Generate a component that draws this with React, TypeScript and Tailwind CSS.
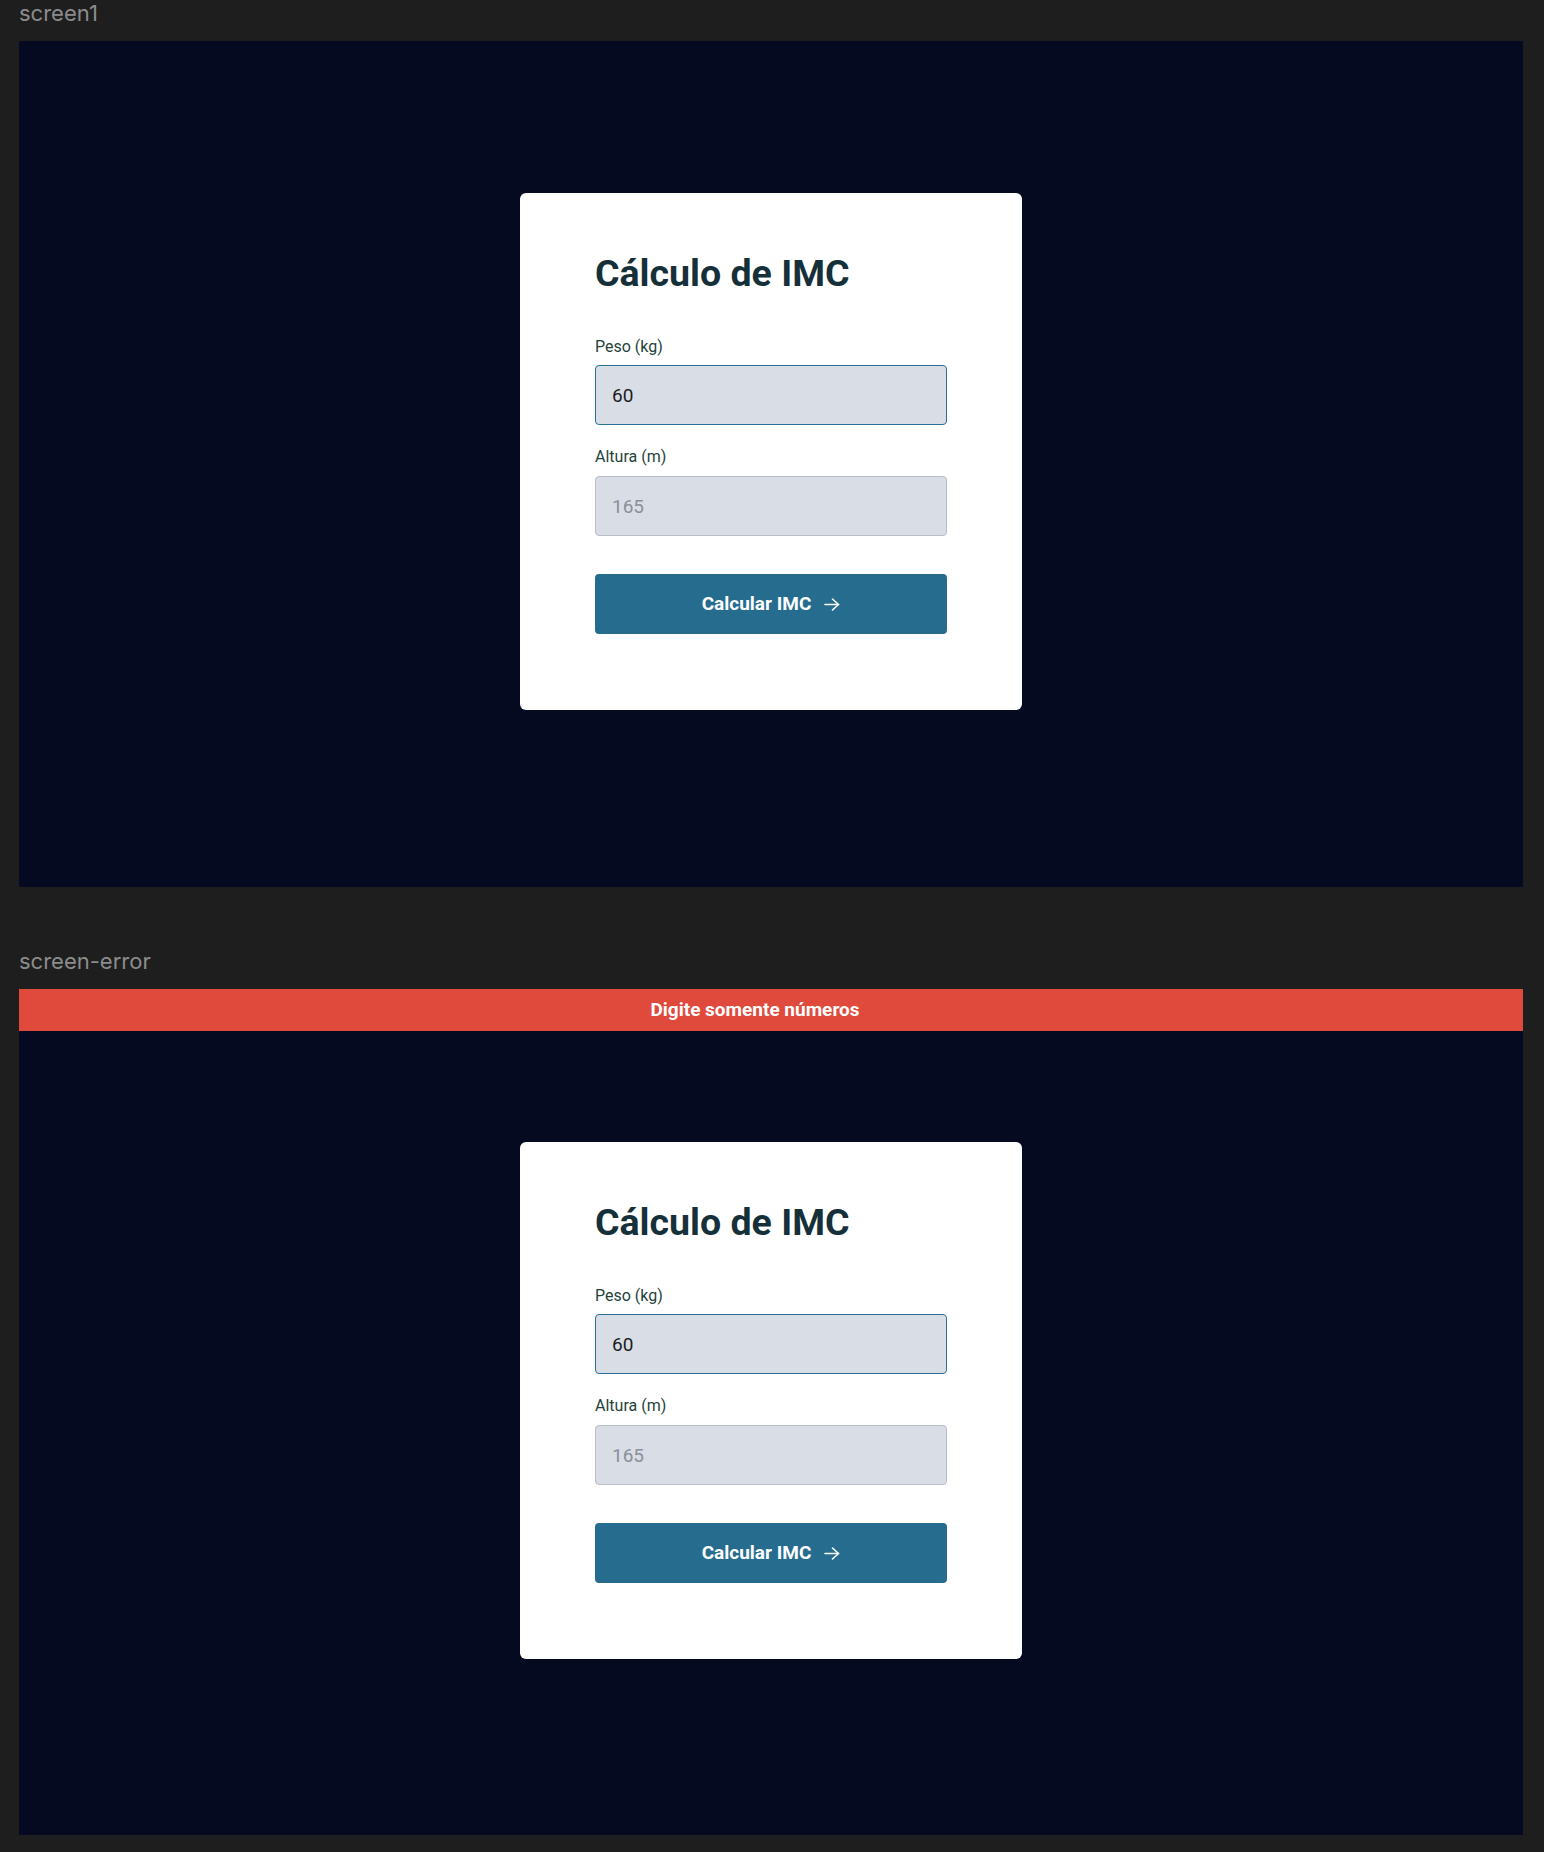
import React from "react";

function Arrow() {
  return (
    <svg width="16" height="13" viewBox="0 0 16 13" fill="none" className="block">
      <path d="M1 6.5h13.5" stroke="white" strokeWidth="1.6" strokeLinecap="round" />
      <path d="M8.5 1l6 5.5-6 5.5" stroke="white" strokeWidth="1.6" strokeLinecap="round" strokeLinejoin="round" />
    </svg>
  );
}

function Card() {
  return (
    <div className="w-[502px] rounded-[6px] bg-white px-[75px] pt-[58px] pb-[76px] font-['Roboto',sans-serif]">
      <h1 className="text-[37.5px] leading-[45px] font-bold text-[#16303a]">Cálculo de IMC</h1>
      <label className="mt-[41px] block text-[16px] leading-[19px] text-[#1f433b]">Peso (kg)</label>
      <input
        readOnly
        value="60"
        className="mt-[9px] block h-[60px] w-full rounded-[4px] border border-[#2a6f97] bg-[#d9dde5] px-4 text-[19px] text-[#1c1c1c] outline-none font-['Roboto',sans-serif]"
      />
      <label className="mt-[22px] block text-[16px] leading-[19px] text-[#1f433b]">Altura (m)</label>
      <input
        readOnly
        placeholder="165"
        className="mt-[10px] block h-[60px] w-full rounded-[4px] border border-[#b9bdc6] bg-[#d9dde5] px-4 text-[19px] text-[#1c1c1c] placeholder:text-[#8b8f99] outline-none font-['Roboto',sans-serif]"
      />
      <button className="mt-[38px] flex h-[60px] w-full items-center justify-center gap-[13px] rounded-[4px] bg-[#266c8f] text-[19px] font-bold text-white font-['Roboto',sans-serif]">
        <span>Calcular IMC</span>
        <Arrow />
      </button>
    </div>
  );
}

export default function App() {
  return (
    <div className="min-h-[1852px] w-full bg-[#1e1e1e] pl-[19px]">
      <div className="text-[22px] leading-[27px] text-[#8c8c8c] font-['Inter',sans-serif]">screen1</div>
      <div className="mt-[14px] flex h-[846px] w-[1504px] flex-col items-center bg-[#050a21] pt-[152px]">
        <Card />
      </div>
      <div className="mt-[61px] text-[22px] leading-[27px] text-[#8c8c8c] font-['Inter',sans-serif]">screen-error</div>
      <div className="relative mt-[14px] flex h-[846px] w-[1504px] flex-col items-center bg-[#050a21] pt-[153px]">
        <div className="absolute left-0 top-0 flex h-[42px] w-full items-center justify-center bg-[#df4a3c] pr-[32px] text-[19px] font-bold text-white font-['Roboto',sans-serif]">
          Digite somente números
        </div>
        <Card />
      </div>
    </div>
  );
}
